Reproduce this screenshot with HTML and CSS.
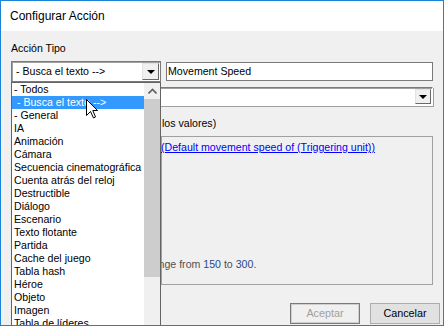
FILE: index.html
```html
<!DOCTYPE html>
<html lang="es">
<head>
<meta charset="utf-8">
<title>Configurar Acción</title>
<link rel="stylesheet" href="styles.css">
</head>
<body>
<div class="window">
  <div class="titlebar">Configurar Acción</div>
  <div class="content">
    <div class="label">Acción Tipo</div>
    <div class="row1">
      <div class="combo combo1">
        <span class="ctext">- Busca el texto --&gt;</span>
        <span class="dd"><i class="tri"></i></span>
      </div>
      <div class="textbox">Movement Speed</div>
    </div>
    <div class="combo combo2">
      <span class="ctext"></span>
      <span class="dd"><i class="tri"></i></span>
    </div>
    <div class="hint">los valores)</div>
    <div class="group">
      <a class="link" href="#">(Default movement speed of (Triggering unit))</a>
      <div class="desc">Range from <span class="num">150</span> to <span class="num">300</span>.</div>
    </div>
    <div class="buttons">
      <div class="btn disabled">Aceptar</div>
      <div class="btn">Cancelar</div>
    </div>
  </div>

  <div class="droplist">
    <div class="items">
      <div class="item">- Todos</div>
      <div class="item sel">&nbsp;- Busca el texto --&gt;</div>
      <div class="item">- General</div>
      <div class="item">IA</div>
      <div class="item">Animación</div>
      <div class="item">Cámara</div>
      <div class="item">Secuencia cinematográfica</div>
      <div class="item">Cuenta atrás del reloj</div>
      <div class="item">Destructible</div>
      <div class="item">Diálogo</div>
      <div class="item">Escenario</div>
      <div class="item">Texto flotante</div>
      <div class="item">Partida</div>
      <div class="item">Cache del juego</div>
      <div class="item">Tabla hash</div>
      <div class="item">Héroe</div>
      <div class="item">Objeto</div>
      <div class="item">Imagen</div>
      <div class="item">Tabla de líderes</div>
    </div>
    <div class="scrollbar">
      <div class="sb-up">
        <svg width="9" height="6" viewBox="0 0 9 6"><path d="M0.5 5.5 L4.5 1.5 L8.5 5.5" fill="none" stroke="#606060" stroke-width="1.6"/></svg>
      </div>
      <div class="sb-thumb"></div>
    </div>
  </div>

  <svg class="cursor" width="13" height="20" viewBox="0 0 13 20">
    <path d="M0.5 0.5 L0.5 16.5 L4.5 12.5 L7.5 19 L9.5 18 L6.8 11.5 L11.5 11.5 Z" fill="#fff" stroke="#000" stroke-width="1" stroke-linejoin="miter"/>
  </svg>
</div>
</body>
</html>
```

FILE: styles.css
```css
html, body {
  margin: 0;
  padding: 0;
}
body {
  width: 444px;
  height: 326px;
  overflow: hidden;
  font-family: "Liberation Sans", Arial, sans-serif;
  font-size: 10.6px;
  color: #000;
}
.window {
  position: relative;
  width: 444px;
  height: 326px;
  box-sizing: border-box;
  border: 1px solid #1883d7;
  background: #f0f0f0;
  overflow: hidden;
}
.titlebar {
  height: 30px;
  line-height: 30px;
  background: #fff;
  padding-left: 9px;
  font-size: 12px;
  color: #000;
}
.content {
  padding: 11px 10px 0 10px;
  display: flex;
  flex-direction: column;
}
.label {
  line-height: 13px;
  height: 13px;
}
.row1 {
  margin-top: 6px;
  display: flex;
  align-items: center;
  gap: 5px;
}
.combo {
  box-sizing: border-box;
  background: #fff;
  border: 1px solid #7a7a7a;
  box-shadow: inset 1px 1px 0 #a0a0a0;
  display: flex;
  align-items: center;
  justify-content: space-between;
}
.combo1 {
  width: 150px;
  height: 21px;
}
.combo2 {
  margin-top: 5px;
  width: 422px;
  height: 19px;
  border-right-color: #fff;
  border-bottom-color: #fff;
  box-shadow: inset 1px 1px 0 #a0a0a0, 1px 1px 0 #a0a0a0;
}
.ctext {
  padding-left: 4px;
  line-height: 17px;
  white-space: nowrap;
}
.dd {
  box-sizing: border-box;
  width: 17px;
  height: 17px;
  margin-right: 1px;
  background: #f0f0f0;
  border: 1px solid;
  border-color: #e3e3e3 #696969 #696969 #e3e3e3;
  display: flex;
  align-items: center;
  justify-content: center;
}
.combo2 .dd {
  height: 15px;
  width: 16px;
  margin-right: 1px;
}
.tri {
  width: 0;
  height: 0;
  border-left: 4px solid transparent;
  border-right: 4px solid transparent;
  border-top: 4px solid #000;
  margin-top: 1px;
}
.textbox {
  box-sizing: border-box;
  width: 267px;
  height: 19px;
  background: #fff;
  border: 1px solid #7a7a7a;
  padding-left: 1px;
  line-height: 17px;
}
.hint {
  margin-top: 11px;
  margin-left: 151px;
  line-height: 13px;
  height: 13px;
}
.group {
  margin-top: 6px;
  margin-left: 150px;
  width: 272px;
  height: 149px;
  box-sizing: border-box;
  border: 1px solid #a0a0a0;
  display: flex;
  flex-direction: column;
  justify-content: space-between;
  padding: 4px 0 13px 0;
}
.link {
  color: #0000ff;
  text-decoration: underline;
  line-height: 13px;
  margin-left: -1px;
  white-space: nowrap;
}
.desc {
  color: #505050;
  line-height: 13px;
  margin-left: -17px;
  white-space: nowrap;
}
.num {
  color: #2a4a8c;
}
.buttons {
  margin-top: 18px;
  margin-right: -7px;
  display: flex;
  justify-content: flex-end;
  gap: 10px;
}
.btn {
  box-sizing: border-box;
  width: 70px;
  height: 21px;
  line-height: 19px;
  text-align: center;
  border: 1px solid #adadad;
  background: #e1e1e1;
  font-size: 10.8px;
}
.btn.disabled {
  color: #a0a0a0;
  background: #f0f0f0;
  border-color: #7a7a7a;
  box-shadow: inset 0 0 0 1px #cfcfcf;
}
.droplist {
  position: absolute;
  left: 10px;
  top: 81px;
  width: 150px;
  height: 260px;
  box-sizing: border-box;
  border: 1px solid #646464;
  background: #fff;
  display: flex;
}
.items {
  width: 132px;
}
.item {
  height: 13px;
  line-height: 13px;
  padding-left: 2px;
  white-space: nowrap;
  overflow: hidden;
}
.item.sel {
  background: #3399ff;
  color: #fff;
}
.scrollbar {
  width: 16px;
  background: #f0f0f0;
  display: flex;
  flex-direction: column;
}
.sb-up {
  height: 16px;
  display: flex;
  align-items: center;
  justify-content: center;
}
.sb-thumb {
  margin-top: 0;
  height: 178px;
  background: #cdcdcd;
}
.cursor {
  position: absolute;
  left: 85px;
  top: 98px;
}
```
